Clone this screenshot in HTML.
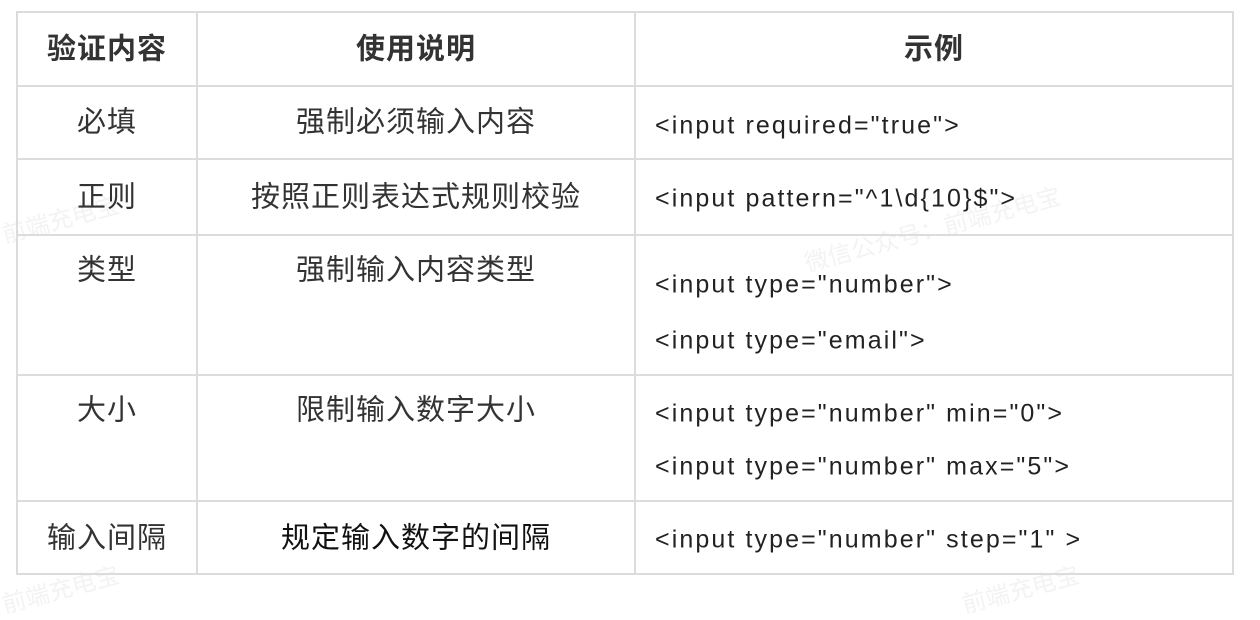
<!DOCTYPE html>
<html><head><meta charset="utf-8"><style>
body{margin:0;width:1260px;height:590px;background:#fff;position:relative;overflow:hidden;font-family:"Liberation Sans","Noto Sans CJK SC",sans-serif;color:#333}
.h{position:absolute;background:#dcdcdc;height:2px}
.v{position:absolute;background:#dcdcdc;width:2px}
.t{position:absolute;white-space:nowrap;font-size:29px;line-height:32px;letter-spacing:1px;transform:translateY(-48%)}
.c{text-align:center}
.code{font-size:25px;color:#222;left:655px;letter-spacing:2.1px}
.wm{position:absolute;color:#f3f3f3;font-size:24px;transform:rotate(-15deg);white-space:nowrap}
</style></head><body>
<div class="wm" style="left:0;top:200px">前端充电宝</div>
<div class="wm" style="left:800px;top:210px">微信公众号：前端充电宝</div>
<div class="wm" style="left:0;top:570px">前端充电宝</div>
<div class="wm" style="left:960px;top:570px">前端充电宝</div>
<div class="h" style="left:17px;width:1217px;top:11px"></div>
<div class="h" style="left:17px;width:1217px;top:85px"></div>
<div class="h" style="left:17px;width:1217px;top:158px"></div>
<div class="h" style="left:17px;width:1217px;top:234px"></div>
<div class="h" style="left:17px;width:1217px;top:374px"></div>
<div class="h" style="left:17px;width:1217px;top:500px"></div>
<div class="h" style="left:17px;width:1217px;top:573px"></div>
<div class="v" style="left:16px;top:11px;height:564px"></div>
<div class="v" style="left:196px;top:11px;height:564px"></div>
<div class="v" style="left:634px;top:11px;height:564px"></div>
<div class="v" style="left:1232px;top:11px;height:564px"></div>

<div class="t c" style="left:18px;width:178px;top:49px;font-weight:bold">验证内容</div>
<div class="t c" style="left:198px;width:436px;top:49px;font-weight:bold">使用说明</div>
<div class="t c" style="left:636px;width:596px;top:49px;font-weight:bold">示例</div>

<div class="t c" style="left:18px;width:178px;top:122px">必填</div>
<div class="t c" style="left:198px;width:436px;top:122px">强制必须输入内容</div>
<div class="t code" style="top:125px">&lt;input required="true"&gt;</div>

<div class="t c" style="left:18px;width:178px;top:197px">正则</div>
<div class="t c" style="left:198px;width:436px;top:197px">按照正则表达式规则校验</div>
<div class="t code" style="top:198px">&lt;input pattern="^1\d{10}$"&gt;</div>

<div class="t c" style="left:18px;width:178px;top:270px">类型</div>
<div class="t c" style="left:198px;width:436px;top:270px">强制输入内容类型</div>
<div class="t code" style="top:284px">&lt;input type="number"&gt;</div>
<div class="t code" style="top:340px">&lt;input type="email"&gt;</div>

<div class="t c" style="left:18px;width:178px;top:410px">大小</div>
<div class="t c" style="left:198px;width:436px;top:410px">限制输入数字大小</div>
<div class="t code" style="top:413px">&lt;input type="number" min="0"&gt;</div>
<div class="t code" style="top:466px">&lt;input type="number" max="5"&gt;</div>

<div class="t c" style="left:18px;width:178px;top:538px">输入间隔</div>
<div class="t c" style="left:198px;width:436px;top:538px;color:#111">规定输入数字的间隔</div>
<div class="t code" style="top:539px">&lt;input type="number" step="1" &gt;</div>
</body></html>
